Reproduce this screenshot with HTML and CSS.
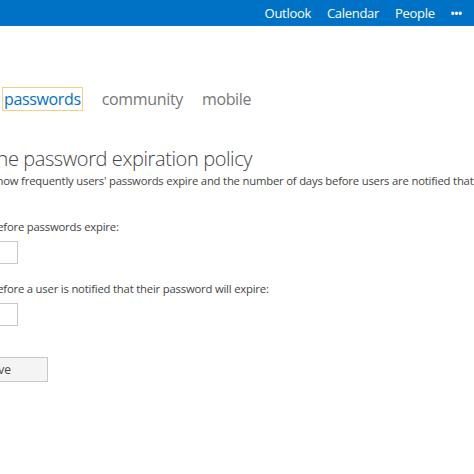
FILE: index.html
```html
<!DOCTYPE html>
<html>
<head>
<meta charset="utf-8">
<link rel="stylesheet" href="styles.css">
</head>
<body>
<header class="topbar">
  <nav class="apps">
    <a class="app">Outlook</a>
    <a class="app">Calendar</a>
    <a class="app">People</a>
    <a class="app more">&bull;&bull;&bull;</a>
  </nav>
</header>
<main class="content">
  <div class="tabs">
    <span class="tab active">passwords</span>
    <span class="tab">community</span>
    <span class="tab">mobile</span>
  </div>
  <h1 class="title">Set the password expiration policy</h1>
  <p class="desc">Specify how frequently users' passwords expire and the number of days before users are notified that their password will expire.</p>
  <form class="form">
    <label class="field">
      <span class="label">Days before passwords expire:</span>
      <input class="input" type="text">
    </label>
    <label class="field">
      <span class="label">Days before a user is notified that their password will expire:</span>
      <input class="input" type="text">
    </label>
    <button class="save" type="button">Save</button>
  </form>
</main>
</body>
</html>
```
FILE: styles.css
```css
html, body {
  margin: 0;
  padding: 0;
  background: #ffffff;
  overflow: hidden;
  width: 474px;
  height: 474px;
}
body {
  font-family: "Open Sans", "Noto Sans", sans-serif;
  color: #444;
}
.topbar {
  height: 26px;
  background: #0072c6;
  display: flex;
  justify-content: flex-end;
  align-items: center;
}
.apps {
  display: flex;
  align-items: center;
  gap: 16px;
  padding-right: 12px;
}
.app {
  color: #fff;
  font-size: 13px;
  letter-spacing: -0.3px;
}
.more {
  font-size: 10px;
  font-weight: 700;
  letter-spacing: 0;
}
.content {
  margin-left: -42px;
  white-space: nowrap;
}
.tabs {
  display: flex;
  align-items: center;
  gap: 19px;
  margin-top: 61px;
  padding-left: 44px;
}
.tab {
  font-size: 16px;
  color: #777;
  line-height: 22px;
  letter-spacing: -0.35px;
}
.tab.active {
  color: #0072c6;
  border: 1px solid #f5cf85;
  padding: 0 1px;
}
.title {
  font-size: 20px;
  font-weight: 300;
  color: #444;
  margin: 34px 0 0 0;
  line-height: 28px;
  letter-spacing: -0.4px;
}
.desc {
  font-size: 11.3px;
  color: #444;
  margin: 0;
  line-height: 16px;
  letter-spacing: -0.2px;
}
.form {
  display: flex;
  flex-direction: column;
  align-items: flex-start;
  margin-top: 30px;
}
.field {
  display: flex;
  flex-direction: column;
  align-items: flex-start;
  margin-bottom: 17px;
}
.label {
  font-size: 11.3px;
  color: #444;
  line-height: 16px;
  letter-spacing: -0.2px;
  margin-left: 5px;
}
.input {
  margin-top: 6px;
  width: 60px;
  height: 23px;
  box-sizing: border-box;
  border: 1px solid #c8c8c8;
  background: #fff;
  padding: 0;
}
.save {
  margin-top: 14px;
  width: 90px;
  height: 25px;
  box-sizing: border-box;
  border: 1px solid #c8c8c8;
  background: #f4f4f4;
  color: #444;
  font-family: "Open Sans", "Noto Sans", sans-serif;
  font-size: 12px;
  text-align: center;
  padding: 0 10px 0 0;
}
```
